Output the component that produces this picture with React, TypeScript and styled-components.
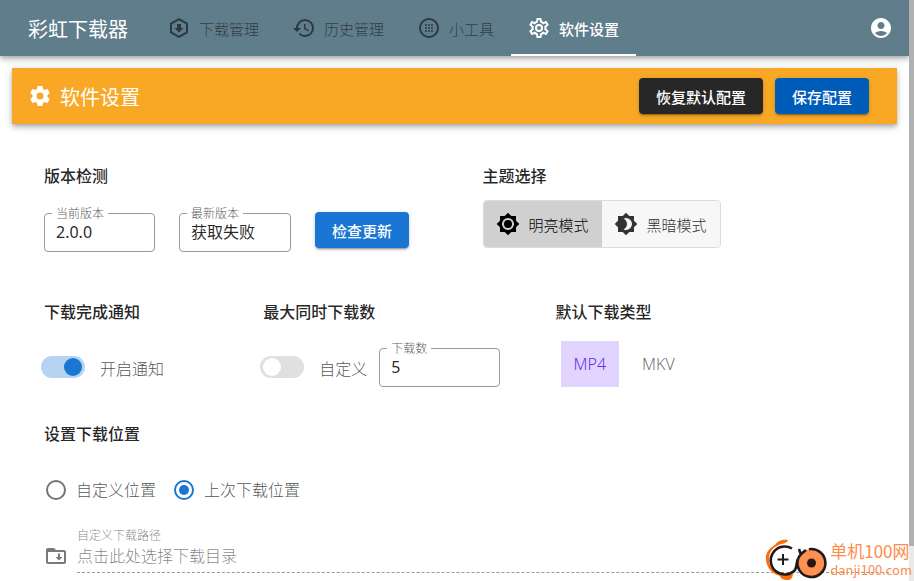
import React, { useState } from "react";
import styled, { createGlobalStyle } from "styled-components";
import { MdAccountCircle } from "react-icons/md";

const GlobalStyle = createGlobalStyle`
  *, *::before, *::after { box-sizing: border-box; }
  body { margin: 0; background: #fff; color: rgba(0, 0, 0, 0.87); }
  body, button, input { font-family: "Noto Sans", "Noto Sans CJK SC", sans-serif; }
  h1, h2, p { margin: 0; }
`;

const COG =
  "M12,15.5A3.5,3.5 0 0,1 8.5,12A3.5,3.5 0 0,1 12,8.5A3.5,3.5 0 0,1 15.5,12A3.5,3.5 0 0,1 12,15.5M19.43,12.97C19.47,12.65 19.5,12.33 19.5,12C19.5,11.67 19.47,11.34 19.43,11L21.54,9.37C21.73,9.22 21.78,8.95 21.66,8.73L19.66,5.27C19.54,5.05 19.27,4.96 19.05,5.05L16.56,6.05C16.04,5.66 15.5,5.32 14.87,5.07L14.5,2.42C14.46,2.18 14.25,2 14,2H10C9.75,2 9.54,2.18 9.5,2.42L9.13,5.07C8.5,5.32 7.96,5.66 7.44,6.05L4.95,5.05C4.73,4.96 4.46,5.05 4.34,5.27L2.34,8.73C2.21,8.95 2.27,9.22 2.46,9.37L4.57,11C4.53,11.34 4.5,11.67 4.5,12C4.5,12.33 4.53,12.65 4.57,12.97L2.46,14.63C2.27,14.78 2.21,15.05 2.34,15.27L4.34,18.73C4.46,18.95 4.73,19.03 4.95,18.95L7.44,17.94C7.96,18.34 8.5,18.68 9.13,18.93L9.5,21.58C9.54,21.82 9.75,22 10,22H14C14.25,22 14.46,21.82 14.5,21.58L14.87,18.93C15.5,18.67 16.04,18.34 16.56,17.94L19.05,18.95C19.27,19.03 19.54,18.95 19.66,18.73L21.66,15.27C21.78,15.05 21.73,14.78 21.54,14.63L19.43,12.97Z";
const COG_OUTLINE =
  "M12,8A4,4 0 0,1 16,12A4,4 0 0,1 12,16A4,4 0 0,1 8,12A4,4 0 0,1 12,8M12,10A2,2 0 0,0 10,12A2,2 0 0,0 12,14A2,2 0 0,0 14,12A2,2 0 0,0 12,10M10,22C9.75,22 9.54,21.82 9.5,21.58L9.13,18.93C8.5,18.68 7.96,18.34 7.44,17.94L4.95,18.95C4.73,19.03 4.46,18.95 4.34,18.73L2.34,15.27C2.21,15.05 2.27,14.78 2.46,14.63L4.57,12.97L4.5,12L4.57,11L2.46,9.37C2.27,9.22 2.21,8.95 2.34,8.73L4.34,5.27C4.46,5.05 4.73,4.96 4.95,5.05L7.44,6.05C7.96,5.66 8.5,5.32 9.13,5.07L9.5,2.42C9.54,2.18 9.75,2 10,2H14C14.25,2 14.46,2.18 14.5,2.42L14.87,5.07C15.5,5.32 16.04,5.66 16.56,6.05L19.05,5.05C19.27,4.96 19.54,5.05 19.66,5.27L21.66,8.73C21.79,8.95 21.73,9.22 21.54,9.37L19.43,11L19.5,12L19.43,13L21.54,14.63C21.73,14.78 21.79,15.05 21.66,15.27L19.66,18.73C19.54,18.95 19.27,19.04 19.05,18.95L16.56,17.95C16.04,18.34 15.5,18.68 14.87,18.93L14.5,21.58C14.46,21.82 14.25,22 14,22H10M11.25,4L10.88,6.61C9.68,6.86 8.62,7.5 7.85,8.39L5.44,7.35L4.69,8.65L6.8,10.2C6.4,11.37 6.4,12.64 6.8,13.8L4.68,15.36L5.43,16.66L7.86,15.62C8.63,16.5 9.68,17.14 10.87,17.38L11.24,20H12.76L13.13,17.39C14.32,17.14 15.37,16.5 16.14,15.62L18.57,16.66L19.32,15.36L17.2,13.81C17.6,12.64 17.6,11.37 17.2,10.2L19.31,8.65L18.56,7.35L16.15,8.39C15.38,7.5 14.32,6.86 13.12,6.62L12.75,4H11.25Z";
const HISTORY =
  "M13.5,8H12V13L16.28,15.54L17,14.33L13.5,12.25V8M13,3A9,9 0 0,0 4,12H1L4.96,16.03L9,12H6A7,7 0 0,1 13,5A7,7 0 0,1 20,12A7,7 0 0,1 13,19C11.07,19 9.32,18.21 8.06,16.94L6.64,18.36C8.27,20 10.5,21 13,21A9,9 0 0,0 22,12A9,9 0 0,0 13,3";
const SUN =
  "M12,18A6,6 0 0,1 6,12A6,6 0 0,1 12,6A6,6 0 0,1 18,12A6,6 0 0,1 12,18M20,15.31L23.31,12L20,8.69V4H15.31L12,0.69L8.69,4H4V8.69L0.69,12L4,15.31V20H8.69L12,23.31L15.31,20H20V15.31M12,8A4,4 0 1,0 12,16A4,4 0 1,0 12,8Z";
const MOON =
  "M12,18C11.11,18 10.26,17.8 9.5,17.45C11.56,16.5 13,14.42 13,12C13,9.58 11.56,7.5 9.5,6.55C10.26,6.2 11.11,6 12,6A6,6 0 0,1 18,12A6,6 0 0,1 12,18M20,8.69V4H15.31L12,0.69L8.69,4H4V8.69L0.69,12L4,15.31V20H8.69L12,23.31L15.31,20H20V15.31L23.31,12L20,8.69Z";

const Glyph = ({ d }: { d: string }) => (
  <svg width="24" height="24" viewBox="0 0 24 24" fill="currentColor" fillRule="evenodd" aria-hidden="true">
    <path d={d} />
  </svg>
);

const HexDownload = () => (
  <svg width="24" height="24" viewBox="0 0 24 24" fill="none" stroke="currentColor" strokeWidth="2" aria-hidden="true">
    <path d="M12 3.1 20 7.500v9l-8 4.400-8-4.400v-9z" strokeLinejoin="miter" />
    <path d="M10 8h4v4h2.500L12 16.500 7.500 12H10z" fill="currentColor" stroke="none" />
  </svg>
);

const DotsCircle = () => (
  <svg width="24" height="24" viewBox="0 0 24 24" fill="none" stroke="currentColor" strokeWidth="2" aria-hidden="true">
    <circle cx="12" cy="12" r="9" />
    <path
      d="M8 9h2M11 9h2M14 9h2M8 12h2M11 12h2M14 12h2M8 15h2M11 15h2M14 15h2"
      strokeWidth="1.400"
    />
  </svg>
);

const FolderDownload = () => (
  <svg width="24" height="24" viewBox="0 0 24 24" fill="currentColor" fillRule="evenodd" aria-hidden="true">
    <path d="M4 4h6l2 2h8a2 2 0 0 1 2 2v10a2 2 0 0 1-2 2H4a2 2 0 0 1-2-2V6c0-1.110.890-2 2-2M4 8v10h16V8zM14 9.500h2V13h2.500L15 16.500 11.500 13H14z" />
  </svg>
);

const Window = styled.div`
  display: flex;
  height: 100vh;
  overflow: hidden;
  position: relative;
`;

const Page = styled.div`
  flex: 1;
  min-width: 0;
  overflow: hidden;
`;

const ScrollTrack = styled.div`
  width: 5px;
  background: #eaeaea;
`;

const ScrollThumb = styled.div`
  height: 94%;
  background: #b1b1b1;
`;

const AppBar = styled.header`
  display: flex;
  align-items: center;
  height: 56px;
  padding: 0 16px 0 28px;
  background: #607d8b;
  color: #fff;
  box-shadow: 0 2px 4px -1px rgba(0, 0, 0, 0.2), 0 4px 5px rgba(0, 0, 0, 0.14), 0 1px 10px rgba(0, 0, 0, 0.12);
`;

const Brand = styled.h1`
  padding-top: 3px;
  font-size: 20px;
  line-height: 32px;
  font-weight: 400;
  white-space: nowrap;
`;

const Tabs = styled.nav`
  display: flex;
  align-self: stretch;
  flex: 1;
  margin-left: 23px;
`;

const Tab = styled.button<{ $active?: boolean }>`
  display: flex;
  align-items: center;
  gap: 8px;
  padding: 2px 17px 0 16px;
  border: 0;
  border-bottom: 2px solid ${(p) => (p.$active ? "#fff" : "transparent")};
  background: transparent;
  color: ${(p) => (p.$active ? "#fff" : "rgba(0, 0, 0, 0.54)")};
  font-size: 15px;
  font-weight: ${(p) => (p.$active ? 500 : 300)};
  white-space: nowrap;
  svg { flex: none; }
`;

const IconButton = styled.button`
  display: flex;
  padding: 0;
  border: 0;
  background: none;
  color: inherit;
`;

const Banner = styled.section`
  display: flex;
  align-items: center;
  gap: 12px;
  min-height: 56px;
  margin: 12px;
  padding: 0 28px 0 16px;
  background: #f9a825;
  color: #fff;
  box-shadow: 0 2px 4px -1px rgba(0, 0, 0, 0.2), 0 4px 5px rgba(0, 0, 0, 0.14), 0 1px 10px rgba(0, 0, 0, 0.12);
`;

const BannerTitle = styled.div`
  display: flex;
  align-items: center;
  gap: 8px;
  flex: 1;

  h2 {
    padding-top: 3px;
    font-size: 20px;
    line-height: 32px;
    font-weight: 400;
  }
`;

const Button = styled.button<{ $color: string }>`
  height: 36px;
  padding: 0 17px;
  border: 0;
  border-radius: 4px;
  background: ${(p) => p.$color};
  color: #fff;
  font-size: 15px;
  font-weight: 500;
  white-space: nowrap;
  box-shadow: 0 3px 1px -2px rgba(0, 0, 0, 0.2), 0 2px 2px rgba(0, 0, 0, 0.14), 0 1px 5px rgba(0, 0, 0, 0.12);
`;

const Settings = styled.main`
  display: grid;
  grid-template-columns: repeat(12, 1fr);
  margin: 40px 4px 0 28px;
`;

const Section = styled.section<{ $span: number; $height: number }>`
  grid-column: span ${(p) => p.$span};
  min-height: ${(p) => p.$height}px;
  padding: 0 16px;
`;

const Heading = styled.h2`
  font-size: 16px;
  line-height: 24px;
  font-weight: 500;
`;

const FieldRow = styled.div<{ $gap: number; $top: number }>`
  display: flex;
  align-items: flex-end;
  gap: ${(p) => p.$gap}px;
  min-height: 48px;
  margin-top: ${(p) => p.$top}px;

  ${Button} { margin-bottom: 4px; }
`;

const RadioRow = styled.div`
  display: flex;
  gap: 18px;
  margin: 32px 0 0 2px;
`;

const Outlined = styled.fieldset<{ $width: number }>`
  width: ${(p) => p.$width}px;
  height: 48px;
  min-width: 0;
  margin: 0;
  padding: 0 11px;
  border: 1px solid #9b9b9b;
  border-radius: 4px;

  legend {
    height: 18px;
    padding: 2px 4px 0;
    margin-left: -4px;
    color: rgba(0, 0, 0, 0.7);
    font-size: 12px;
    line-height: 16px;
    font-weight: 300;
  }

  input {
    display: block;
    width: 100%;
    height: 20px;
    padding: 0;
    border: 0;
    outline: 0;
    background: none;
    color: rgba(0, 0, 0, 0.87);
    font-size: 16px;
    line-height: 20px;
  }
`;

const ThemeGroup = styled.div`
  display: inline-flex;
  margin-top: 12px;
  border: 1px solid #dcdcdc;
  border-radius: 4px;
  overflow: hidden;
`;

const ThemeButton = styled.button<{ $active: boolean }>`
  display: flex;
  align-items: center;
  gap: 9px;
  height: 46px;
  padding: 0 13px 0 12px;
  border: 0;
  background: ${(p) => (p.$active ? "#d0d0d0" : "#f7f7f7")};
  color: ${(p) => (p.$active ? "#000" : "#333")};
  font-size: 15px;
  font-weight: 300;
`;

const CheckLabel = styled.label`
  display: flex;
  align-items: center;
  gap: 15px;
  margin: 0 0 8px -3px;
  color: rgba(0, 0, 0, 0.7);
  font-size: 16px;
  line-height: 24px;
  font-weight: 300;
  white-space: nowrap;

  span { padding-top: 2px; margin-bottom: -2px; }
`;

const Switch = styled.input`
  appearance: none;
  flex: none;
  width: 44px;
  height: 22px;
  margin: 0;
  padding: 2px 3px;
  border-radius: 11px;
  background: #e0e0e0;

  &::before {
    content: "";
    display: block;
    width: 18px;
    height: 18px;
    border-radius: 50%;
    background: #fff;
  }
  &:checked { background: #b6d3f2; }
  &:checked::before { margin-left: 20px; background: #1976d2; }
`;

const TypeButton = styled.button<{ $active: boolean }>`
  height: 46px;
  padding: 0 13px;
  border: 0;
  background: ${(p) => (p.$active ? "#e1d5ff" : "transparent")};
  color: ${(p) => (p.$active ? "#6b2cf0" : "rgba(0, 0, 0, 0.6)")};
  font-size: 16px;
  font-weight: 300;
`;

const TypeGroup = styled.div`
  display: flex;
  gap: 10px;
  margin: 17px 0 0 5px;
`;

const RadioLabel = styled.label`
  display: flex;
  align-items: center;
  gap: 10px;
  color: rgba(0, 0, 0, 0.7);
  font-size: 16px;
  line-height: 24px;
  font-weight: 300;
`;

const Radio = styled.input`
  appearance: none;
  width: 20px;
  height: 20px;
  margin: 0;
  padding: 3px;
  border: 2px solid #757575;
  border-radius: 50%;

  &:checked {
    border-color: #1976d2;
    background: #1976d2 content-box;
  }
`;

const PathRow = styled.div`
  display: flex;
  align-items: flex-end;
  gap: 9px;
  margin-top: 26px;
  color: #7a7a7a;
  svg { flex: none; margin-bottom: 5px; }
`;

const PathField = styled.label`
  display: flex;
  flex-direction: column;
  flex: 1;
  border-bottom: 1px dashed #999;
  color: rgba(0, 0, 0, 0.5);
  font-size: 12px;
  line-height: 16px;
  font-weight: 300;

  input {
    height: 28px;
    padding: 0 0 4px;
    border: 0;
    outline: 0;
    background: none;
    font-size: 16px;
    font-weight: 300;
  }
  input::placeholder { color: rgba(0, 0, 0, 0.5); }
`;

const SiteMark = styled.div`
  position: absolute;
  right: 2px;
  bottom: 0;
  display: flex;
  align-items: center;
  color: #ff8b4c;
`;

const SiteText = styled.div`
  display: flex;
  flex-direction: column;
  font-family: "Noto Sans CJK SC", sans-serif;
`;

const SiteName = styled.span`
  font-size: 17px;
  line-height: 20px;
`;

const SiteHost = styled.span`
  font-size: 13px;
  line-height: 18px;
`;

const SiteLogo = () => (
  <svg width="66" height="43" viewBox="0 0 66 43" fill="none" aria-hidden="true">
    <path
      d="M24 2C17 1 13 4 11 7C4 11 1 16 2 22C3 31 9 36 16 38C17 42 24 43 27 41C29 39 28 37 30 36C24 38 20 37 14 35C8 32 5 27 5 21C5 15 8 10 13 8C18 5 23 6 24 2Z"
      fill="#ff6c0a"
    />
    <path d="M28 10.500A14 14 0 1 0 31 32c2-3 1-7 3-11" stroke="#221a1a" strokeWidth="2.600" />
    <circle cx="47.500" cy="25" r="14" fill="#ff9150" />
    <path d="M45 11.200A14 14 0 1 1 34 21c1-4 4-6 8-9M35 11l2 6" stroke="#221a1a" strokeWidth="2.600" />
    <path d="M19 16v11M13.500 21.500h11" stroke="#221a1a" strokeWidth="2" />
    <circle cx="47.500" cy="25" r="4.500" fill="#221a1a" />
  </svg>
);

const Field = ({ label, value, width }: { label: string; value: string; width: number }) => (
  <Outlined $width={width}>
    <legend>{label}</legend>
    <input aria-label={label} defaultValue={value} />
  </Outlined>
);

const NAV = [
  { label: "下载管理", icon: <HexDownload /> },
  { label: "历史管理", icon: <Glyph d={HISTORY} /> },
  { label: "小工具", icon: <DotsCircle /> },
  { label: "软件设置", icon: <Glyph d={COG_OUTLINE} /> },
];

export default function App() {
  const [tab, setTab] = useState("软件设置");
  const [dark, setDark] = useState(false);
  const [type, setType] = useState("MP4");

  return (
    <Window>
      <GlobalStyle />
      <Page>
        <AppBar>
          <Brand>彩虹下载器</Brand>
          <Tabs>
            {NAV.map((n) => (
              <Tab key={n.label} $active={n.label === tab} onClick={() => setTab(n.label)}>
                {n.icon}
                {n.label}
              </Tab>
            ))}
          </Tabs>
          <IconButton aria-label="账户">
            <MdAccountCircle size={24} />
          </IconButton>
        </AppBar>
        <Banner>
          <BannerTitle>
            <Glyph d={COG} />
            <h2>软件设置</h2>
          </BannerTitle>
          <Button $color="#272727">恢复默认配置</Button>
          <Button $color="#005cb9">保存配置</Button>
        </Banner>
        <Settings>
          <Section $span={6} $height={136}>
            <Heading>版本检测</Heading>
            <FieldRow $gap={24} $top={16}>
              <Field label="当前版本" value="2.0.0" width={111} />
              <Field label="最新版本" value="获取失败" width={112} />
              <Button $color="#1976d2">检查更新</Button>
            </FieldRow>
          </Section>
          <Section $span={6} $height={136}>
            <Heading>主题选择</Heading>
            <ThemeGroup>
              <ThemeButton $active={!dark} onClick={() => setDark(false)}>
                <Glyph d={SUN} />
                明亮模式
              </ThemeButton>
              <ThemeButton $active={dark} onClick={() => setDark(true)}>
                <Glyph d={MOON} />
                黑暗模式
              </ThemeButton>
            </ThemeGroup>
          </Section>
          <Section $span={3} $height={122}>
            <Heading>下载完成通知</Heading>
            <FieldRow $gap={12} $top={15}>
              <CheckLabel>
                <Switch type="checkbox" defaultChecked />
                <span>开启通知</span>
              </CheckLabel>
            </FieldRow>
          </Section>
          <Section $span={4} $height={122}>
            <Heading>最大同时下载数</Heading>
            <FieldRow $gap={12} $top={15}>
              <CheckLabel>
                <Switch type="checkbox" />
                <span>自定义</span>
              </CheckLabel>
              <Field label="下载数" value="5" width={121} />
            </FieldRow>
          </Section>
          <Section $span={5} $height={122}>
            <Heading>默认下载类型</Heading>
            <TypeGroup>
              {["MP4", "MKV"].map((t) => (
                <TypeButton key={t} $active={t === type} onClick={() => setType(t)}>
                  {t}
                </TypeButton>
              ))}
            </TypeGroup>
          </Section>
          <Section $span={12} $height={160}>
            <Heading>设置下载位置</Heading>
            <RadioRow>
              <RadioLabel>
                <Radio type="radio" name="location" />
                自定义位置
              </RadioLabel>
              <RadioLabel>
                <Radio type="radio" name="location" defaultChecked />
                上次下载位置
              </RadioLabel>
            </RadioRow>
            <PathRow>
              <FolderDownload />
              <PathField>
                自定义下载路径
                <input placeholder="点击此处选择下载目录" disabled />
              </PathField>
            </PathRow>
          </Section>
        </Settings>
      </Page>
      <ScrollTrack>
        <ScrollThumb />
      </ScrollTrack>
      <SiteMark>
        <SiteLogo />
        <SiteText>
          <SiteName>单机100网</SiteName>
          <SiteHost>danji100.com</SiteHost>
        </SiteText>
      </SiteMark>
    </Window>
  );
}
